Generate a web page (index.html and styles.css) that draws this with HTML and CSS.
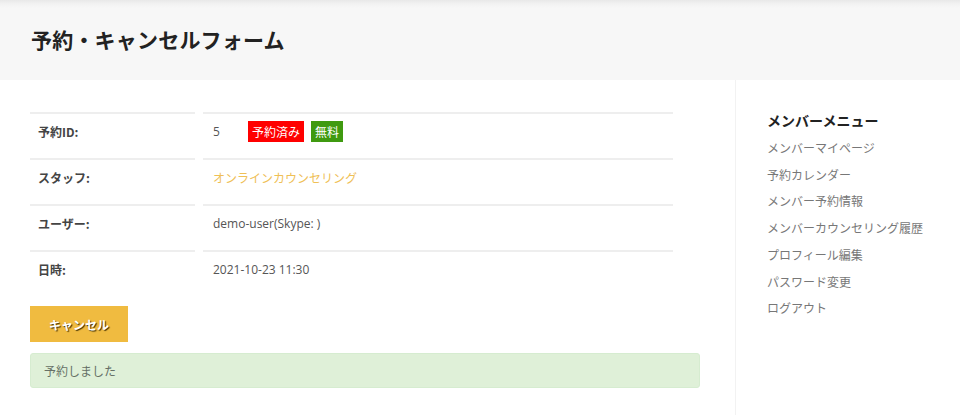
FILE: index.html
```html
<!DOCTYPE html>
<html lang="ja">
<head>
<meta charset="utf-8">
<link rel="stylesheet" href="styles.css">
</head>
<body>
<header class="page-header">
  <h1 class="page-title">予約・キャンセルフォーム</h1>
</header>
<div class="layout">
  <main class="main">
    <div class="info">
      <div class="cell label">予約ID:</div>
      <div class="cell value"><span class="id">5</span><span class="badge badge-red">予約済み</span><span class="badge badge-green">無料</span></div>
      <div class="cell label">スタッフ:</div>
      <div class="cell value"><a class="staff">オンラインカウンセリング</a></div>
      <div class="cell label">ユーザー:</div>
      <div class="cell value">demo-user(Skype: )</div>
      <div class="cell label">日時:</div>
      <div class="cell value">2021-10-23 11:30</div>
    </div>
    <button class="btn-cancel">キャンセル</button>
    <div class="alert">予約しました</div>
  </main>
  <aside class="sidebar">
    <h2 class="side-title">メンバーメニュー</h2>
    <ul class="side-menu">
      <li>メンバーマイページ</li>
      <li>予約カレンダー</li>
      <li>メンバー予約情報</li>
      <li>メンバーカウンセリング履歴</li>
      <li>プロフィール編集</li>
      <li>パスワード変更</li>
      <li>ログアウト</li>
    </ul>
  </aside>
</div>
</body>
</html>
```
FILE: styles.css
```css
* { box-sizing: border-box; }
html, body { margin: 0; padding: 0; background: #fff; }
body {
  font-family: "Open Sans", "Noto Sans CJK JP", sans-serif;
  color: #555;
  font-size: 12px;
  height: 415px;
  overflow: hidden;
}
.page-header {
  height: 80px;
  background: linear-gradient(#e8e8e8 0, #f2f2f2 4px, #f7f7f7 8px, #f7f7f7 100%);
  display: flex;
  align-items: center;
  padding-left: 31px;
  padding-bottom: 3px;
}
.page-title {
  margin: 0;
  font-family: "Noto Sans CJK JP", sans-serif;
  font-size: 21px;
  font-weight: 700;
  color: #222;
  letter-spacing: 0.2px;
}
.layout {
  display: flex;
  height: 335px;
}
.main {
  width: 735px;
  padding: 32px 35px 0 30px;
}
.info {
  display: grid;
  grid-template-columns: 165px 470px;
  column-gap: 8px;
}
.cell {
  height: 46px;
  border-top: 2px solid #eeeeee;
  display: flex;
  align-items: center;
  padding-left: 8px;
  padding-bottom: 9px;
}
.label {
  font-family: "Noto Sans CJK JP", sans-serif;
  font-weight: 700;
  color: #444;
  font-size: 12px;
}
.value { padding-left: 10px; color: #555; }
.id { width: 35px; }
.badge {
  display: inline-flex;
  align-items: center;
  height: 21px;
  padding: 0 4px;
  color: #fff;
  font-family: "Noto Sans CJK JP", serif;
  font-size: 12px;
  margin-right: 7px;
}
.badge-red { background: #ff0000; }
.badge-green { background: #3f9a10; }
.staff { color: #efc056; }
.btn-cancel {
  display: block;
  margin-top: 10px;
  width: 98px;
  height: 36px;
  border: 0;
  background: #f0bb40;
  color: #fff;
  font-family: "Noto Sans CJK JP", sans-serif;
  font-weight: 700;
  font-size: 12px;
  text-shadow: 1px 1px 1px #3a2a00;
  padding: 0;
}
.alert {
  margin-top: 11px;
  width: 670px;
  height: 35px;
  background: #dff0d8;
  border: 1px solid #d6ecd0;
  border-radius: 3px;
  padding-left: 13px;
  display: flex;
  align-items: center;
  font-family: "Noto Sans CJK JP", sans-serif;
  color: #667066;
  font-size: 12px;
}
.sidebar {
  flex: 1;
  border-left: 1px solid #f2f2f2;
  padding: 30px 0 0 31px;
}
.side-title {
  margin: 0 0 5px;
  font-family: "Noto Sans CJK JP", sans-serif;
  font-size: 14px;
  line-height: 20px;
  font-weight: 700;
  color: #222;
}
.side-menu {
  list-style: none;
  margin: 0;
  padding: 0;
  font-family: "Noto Sans CJK JP", sans-serif;
  font-size: 12px;
  line-height: 26.7px;
  color: #777;
}
```
